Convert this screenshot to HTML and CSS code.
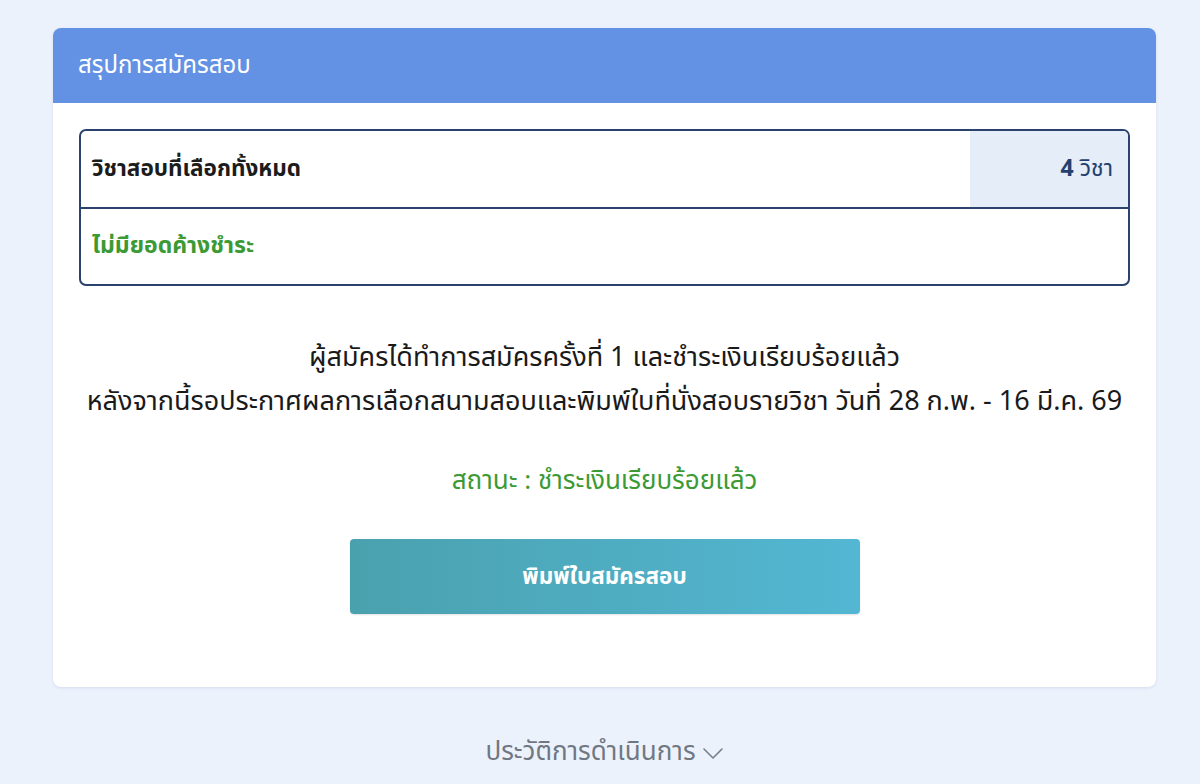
FILE: index.html
```html
<!DOCTYPE html>
<html lang="th">
<head>
<meta charset="utf-8">
<link rel="stylesheet" href="styles.css">
</head>
<body>
<main class="page">
  <section class="card">
    <header class="card-header">สรุปการสมัครสอบ</header>
    <div class="card-body">
      <div class="summary">
        <div class="summary-row">
          <div class="summary-label">วิชาสอบที่เลือกทั้งหมด</div>
          <div class="summary-value"><strong>4</strong> วิชา</div>
        </div>
        <div class="summary-row">
          <div class="summary-label green">ไม่มียอดค้างชำระ</div>
        </div>
      </div>
      <p class="message">ผู้สมัครได้ทำการสมัครครั้งที่ 1 และชำระเงินเรียบร้อยแล้ว<br>หลังจากนี้รอประกาศผลการเลือกสนามสอบและพิมพ์ใบที่นั่งสอบรายวิชา วันที่ 28 ก.พ. - 16 มี.ค. 69</p>
      <p class="status">สถานะ : ชำระเงินเรียบร้อยแล้ว</p>
      <div class="actions"><button class="print-btn">พิมพ์ใบสมัครสอบ</button></div>
    </div>
  </section>
  <div class="history">ประวัติการดำเนินการ <svg class="chev" width="22" height="13" viewBox="0 0 22 13"><path d="M2 2 L11 11 L20 2" fill="none" stroke="#7a7f88" stroke-width="1.6" stroke-linecap="round" stroke-linejoin="round"/></svg></div>
</main>
</body>
</html>
```
FILE: styles.css
```css
html, body {
  margin: 0;
  padding: 0;
  background: #ebf2fc;
  font-family: "Noto Sans Thai", "Noto Sans", sans-serif;
  color: #1a1a1a;
}
.page {
  padding: 28px 44px 0 53px;
}
.card {
  background: #fff;
  border-radius: 8px;
  overflow: hidden;
  box-shadow: 0 1px 3px rgba(40, 70, 120, 0.12);
}
.card-header {
  background: #6392e4;
  color: #fff;
  font-size: 24px;
  height: 75px;
  display: flex;
  align-items: center;
  padding-left: 25px;
}
.card-body {
  padding: 26px 26px 73px;
}
.summary {
  border: 2px solid #2b416e;
  border-radius: 7px;
  overflow: hidden;
}
.summary-row {
  display: flex;
  height: 75.5px;
}
.summary-row + .summary-row {
  border-top: 2px solid #2b416e;
}
.summary-label {
  flex: 1;
  display: flex;
  align-items: center;
  padding-left: 11px;
  font-size: 22.5px;
  font-weight: 700;
  color: #1c1c1c;
}
.summary-label.green {
  font-size: 23px;
  color: #3c9a35;
}
.summary-value {
  width: 158px;
  background: #e5edf8;
  display: flex;
  align-items: center;
  justify-content: flex-end;
  padding-right: 15px;
  box-sizing: border-box;
  font-size: 23px;
  color: #24406f;
}
.summary-value strong {
  font-weight: 700;
  margin-right: 6px;
}
.message {
  margin: 50px 0 0;
  text-align: center;
  font-size: 27px;
  line-height: 44px;
  color: #1a1a1a;
}
.status {
  margin: 40px 0 0;
  text-align: center;
  font-size: 26px;
  line-height: 34px;
  color: #3c9a35;
}
.actions {
  display: flex;
  justify-content: center;
  margin-top: 41px;
}
.print-btn {
  width: 510px;
  height: 75px;
  border: none;
  border-radius: 4px;
  background: linear-gradient(90deg, #4aa1ae 0%, #53b7d3 100%);
  color: #fff;
  font-family: inherit;
  font-size: 22.5px;
  font-weight: 700;
  box-shadow: 0 1px 2px rgba(0,0,0,0.12);
}
.history {
  display: flex;
  align-items: center;
  justify-content: center;
  gap: 6px;
  margin-top: 47px;
  font-size: 26px;
  line-height: 36px;
  color: #717782;
}
.chev {
  margin-top: 2px;
}
```
